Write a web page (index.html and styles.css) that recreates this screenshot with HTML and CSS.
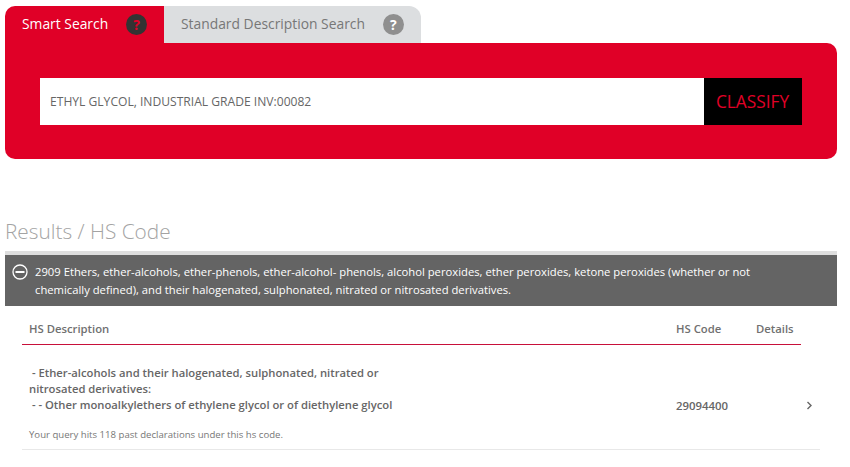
FILE: index.html
```html
<!DOCTYPE html>
<html lang="en">
<head>
  <meta charset="UTF-8">
  <title>Results / HS Code</title>
  <link rel="stylesheet" href="styles.css">
</head>
<body>
  <div class="tabs">
    <div class="tab tab-active">Smart Search <span class="help help-dark">?</span></div>
    <div class="tab tab-other">Standard Description Search <span class="help help-grey">?</span></div>
  </div>
  <div class="search-panel">
    <div class="query">ETHYL GLYCOL, INDUSTRIAL GRADE INV:00082</div>
    <div class="classify">CLASSIFY</div>
  </div>

  <h2 class="results-title">Results / HS Code</h2>

  <div class="heading-bar">
    <svg class="collapse-icon" width="16" height="16" viewBox="0 0 16 16">
      <circle cx="8" cy="8" r="7" fill="none" stroke="#fff" stroke-width="1.3"/>
      <rect x="3.5" y="7" width="9" height="2" fill="#fff"/>
    </svg>
    <p>2909 Ethers, ether-alcohols, ether-phenols, ether-alcohol- phenols, alcohol peroxides, ether peroxides, ketone peroxides (whether or not chemically defined), and their halogenated, sulphonated, nitrated or nitrosated derivatives.</p>
  </div>

  <div class="table-head">
    <span class="col-desc">HS Description</span>
    <span class="col-code">HS Code</span>
    <span class="col-details">Details</span>
  </div>

  <div class="result-row">
    <div class="row-main">
      <div class="col-desc desc-text">&nbsp;- Ether-alcohols and their halogenated, sulphonated, nitrated or nitrosated derivatives:<br>&nbsp;- - Other monoalkylethers of ethylene glycol or of diethylene glycol</div>
      <div class="col-code code-text">29094400</div>
      <svg class="chevron" width="7" height="9" viewBox="0 0 7 9">
        <path d="M1.5 1 L5 4.5 L1.5 8" fill="none" stroke="#666" stroke-width="1.4"/>
      </svg>
    </div>
    <p class="hits">Your query hits 118 past declarations under this hs code.</p>
  </div>
</body>
</html>
```

FILE: styles.css
```css
* { box-sizing: border-box; }
body {
  margin: 0;
  padding: 6px 13px 0 5px;
  font-family: 'Open Sans', sans-serif;
  background: #fff;
  color: #666;
}
.tabs {
  display: flex;
  height: 37px;
}
.tab {
  display: flex;
  align-items: center;
  font-size: 13.85px;
  padding-bottom: 2px;
}
.tab-active {
  width: 159px;
  padding-left: 17px;
  background: #e00027;
  color: #fff;
  border-radius: 10px 0 0 0;
}
.tab-other {
  width: 257px;
  padding-left: 17px;
  background: #dcdee0;
  color: #777;
  border-radius: 0 12px 0 0;
}
.help {
  display: flex;
  align-items: center;
  justify-content: center;
  width: 21px;
  height: 21px;
  margin: 2px 0 0 18px;
  border-radius: 50%;
  font-size: 14px;
  font-weight: 700;
}
.help-dark {
  background: #333;
  color: #e00027;
}
.help-grey {
  background: #8f8f8f;
  color: #fff;
}
.search-panel {
  display: flex;
  height: 116px;
  padding: 35px 35px 34px;
  background: #e00027;
  border-radius: 0 10px 10px 10px;
}
.query {
  flex: 1;
  display: flex;
  align-items: center;
  padding-left: 10px;
  background: #fff;
  font-size: 12.1px;
  color: #666;
}
.classify {
  width: 98px;
  display: flex;
  align-items: center;
  justify-content: center;
  padding-right: 1px;
  background: #000;
  color: #e00027;
  font-size: 17.3px;
}
.results-title {
  margin: 57px 0 5px;
  font-size: 20.8px;
  line-height: 30px;
  font-weight: 300;
  color: #a3a3a3;
}
.heading-bar {
  display: flex;
  gap: 7px;
  height: 55px;
  padding: 8px 80px 0 7px;
  border-top: 4px solid #dedede;
  background: #646464;
  color: #fff;
}
.heading-bar p {
  margin: 0;
  font-size: 11.25px;
  line-height: 18px;
}
.collapse-icon {
  flex: none;
  margin-top: 1px;
}
.table-head {
  display: flex;
  align-items: center;
  width: 779px;
  height: 39px;
  margin-left: 17px;
  padding-top: 6px;
  border-bottom: 1px solid #c8103a;
  font-size: 11.3px;
  font-weight: 600;
  color: #707070;
}
.col-desc {
  width: 654px;
  padding-left: 7px;
  flex: none;
}
.col-code {
  width: 80px;
  flex: none;
}
.result-row {
  width: 798px;
  margin-left: 17px;
  padding-top: 20px;
  border-bottom: 1px solid #e8e8e8;
}
.row-main {
  display: flex;
  align-items: center;
}
.desc-text {
  font-size: 11.25px;
  line-height: 16px;
  font-weight: 600;
  padding-right: 275px;
}
.code-text {
  font-size: 11.4px;
  font-weight: 600;
  margin-top: 32px;
}
.chevron {
  margin-left: 50px;
  margin-top: 32px;
}
.hits {
  margin: 15px 0 7px 7px;
  font-size: 9.6px;
  line-height: 14px;
  color: #777;
}
```
